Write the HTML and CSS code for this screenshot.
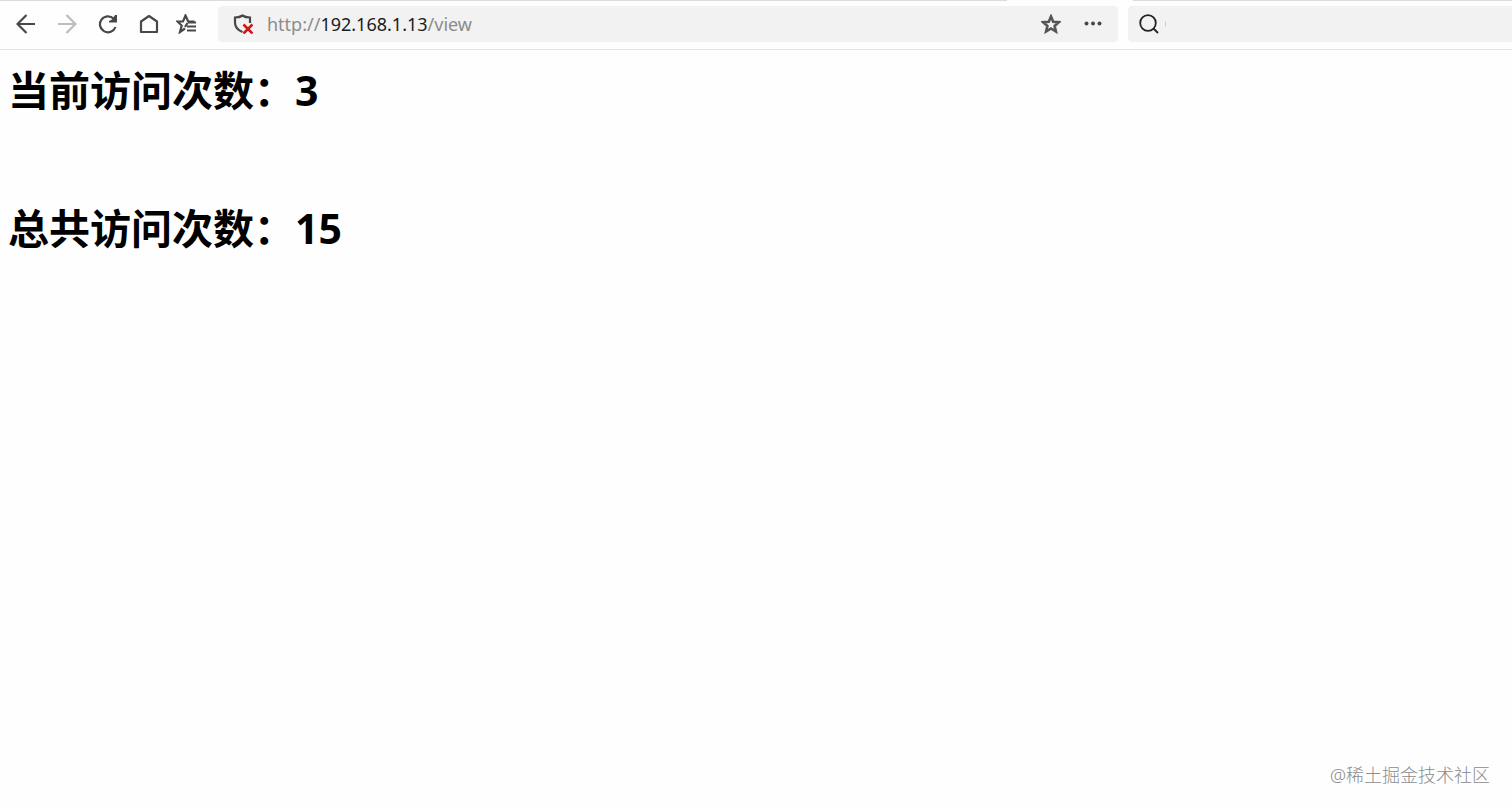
FILE: index.html
```html
<!DOCTYPE html>
<html lang="zh-CN">
<head>
    <meta charset="UTF-8">
    <meta name="viewport" content="width=device-width, initial-scale=1.0">
    <title>view</title>
    <link rel="stylesheet" href="styles.css">
</head>
<body>
    <header class="browser">
        <div class="tab-edge">
            <span class="edge-left"></span>
            <span class="edge-right"></span>
        </div>
        <div class="toolbar">
            <nav class="nav-buttons">
                <button type="button" aria-label="后退">
                    <svg viewBox="0 0 20 20"><path d="M10.500 1L1.500 10l9 9M1.500 10H19"/></svg>
                </button>
                <button type="button" aria-label="前进" disabled>
                    <svg viewBox="0 0 20 20"><path d="M9.500 1l9 9-9 9M18.500 10H1"/></svg>
                </button>
                <button type="button" aria-label="刷新">
                    <svg viewBox="0 0 20 20"><path d="M15.500 4.500A8 8 0 1 0 17.500 13"/><path class="solid" d="M17 1h2v7.500h-8V7l3-1.500z"/></svg>
                </button>
                <button type="button" aria-label="主页">
                    <svg viewBox="0 0 20 20"><path d="M2 18V7.500L10 2l8 5.500V18z" stroke-linejoin="round"/></svg>
                </button>
                <button type="button" aria-label="收藏夹" class="favorites">
                    <svg viewBox="0 0 20 20"><path d="M18.500 7.500h-6.300L9.500 1.500 7 7.500H1.500l4.200 4L4 18l5-3.500M11.500 9L9 13"/><path d="M12 8.500h8M11 12.500h9M11 16.500h9"/></svg>
                </button>
            </nav>
            <div class="address">
                <svg class="shield" viewBox="0 0 20 20"><path d="M9.500 18C4.500 16 2 13 2 8.500V3.500c3 0 5.500-.5 7.500-2 2 1.500 4.500 2 7.500 2V9"/><path class="cross" d="M10.500 10.500l9 9M19.500 10.500l-9 9"/></svg>
                <div class="url" role="textbox" aria-label="地址" contenteditable="true" spellcheck="false">http://<span class="host">192.168.1.13</span>/view</div>
                <button type="button" aria-label="收藏">
                    <svg class="star" viewBox="0 0 20 20"><path d="M10 2.500l2.200 5.200 5.600.5-4.200 3.700 1.300 5.600-4.900-3-4.900 3 1.300-5.600-4.200-3.700 5.600-.5z"/></svg>
                </button>
                <button type="button" aria-label="更多">
                    <svg viewBox="0 0 20 20"><g class="solid"><circle cx="3.500" cy="9.500" r="2"/><circle cx="10" cy="9.500" r="2"/><circle cx="16.500" cy="9.500" r="2"/></g></svg>
                </button>
            </div>
            <label class="search">
                <svg viewBox="0 0 20 20"><circle cx="9" cy="9" r="7.800"/><path d="M14.500 14.500L19 19"/></svg>
                <span class="separator"></span>
                <input type="text" aria-label="搜索">
            </label>
        </div>
    </header>

    <main>
        <h1>当前访问次数：3</h1>
        <h1>总共访问次数：15</h1>
    </main>

    <footer class="watermark">@稀土掘金技术社区</footer>
</body>
</html>
```
FILE: styles.css
```css
* {
    box-sizing: border-box;
}

body {
    margin: 0;
    min-height: 100vh;
    display: flex;
    flex-direction: column;
    background-color: #fefefe;
    font-family: "Noto Sans", "Noto Sans CJK SC", sans-serif;
    color: #000;
}

.browser {
    border-bottom: 1px solid #e2e2e2;
}

.tab-edge {
    display: flex;
    justify-content: space-between;
    height: 1px;
}

.edge-left {
    width: 66.6%;
    background-color: #dcdcdc;
}

.edge-right {
    width: 25.1%;
    background-color: #dcdcdc;
}

.toolbar {
    display: flex;
    align-items: center;
    height: 48px;
    padding-bottom: 2px;
}

svg {
    display: block;
    flex: none;
    width: 20px;
    height: 20px;
    fill: none;
    stroke: #484848;
    stroke-width: 2.2;
}

.solid {
    fill: #484848;
    stroke: none;
}

button {
    padding: 0;
    border: 0;
    background: none;
    cursor: pointer;
}

button:disabled svg {
    stroke: #bdbdbd;
}

.nav-buttons {
    display: flex;
    gap: 21px;
    padding: 0 22px 0 16px;
}

.nav-buttons .favorites {
    margin-left: -4px;
}

.address {
    display: flex;
    align-items: center;
    flex: 70 1 0;
    height: 36px;
    padding: 0 15px;
    border-radius: 4px;
    background-color: #f2f2f2;
}

.shield .cross {
    stroke: #d01616;
    stroke-width: 2.6;
}

.star {
    stroke: #555;
    stroke-width: 2.6;
}

.url {
    flex: 1;
    margin-left: 14px;
    font-size: 18px;
    line-height: 24px;
    color: #8c8c8c;
    white-space: nowrap;
    outline: none;
}

.host {
    color: #1c1c1c;
}

.address button {
    margin-left: 22px;
}

.search {
    display: flex;
    align-items: center;
    flex: 30 1 0;
    height: 36px;
    margin-left: 10px;
    padding-left: 11px;
    border-radius: 4px 0 0 4px;
    background-color: #f2f2f2;
}

.search svg {
    stroke: #222;
    stroke-width: 1.8;
}

.separator {
    width: 1px;
    height: 6px;
    margin-left: 6px;
    background-color: #d4d4d4;
}

.search input {
    flex: 1;
    min-width: 0;
    margin-left: 8px;
    border: 0;
    outline: none;
    background: none;
    font-size: 18px;
}

main {
    flex: 1;
    padding: 8px;
}

h1 {
    margin: 0 0 74px;
    font-size: 41px;
    line-height: 64px;
}

.watermark {
    padding: 0 22px 20px;
    font-size: 18px;
    font-weight: 300;
    line-height: 26px;
    text-align: right;
    color: #8c8c8c;
}
```
